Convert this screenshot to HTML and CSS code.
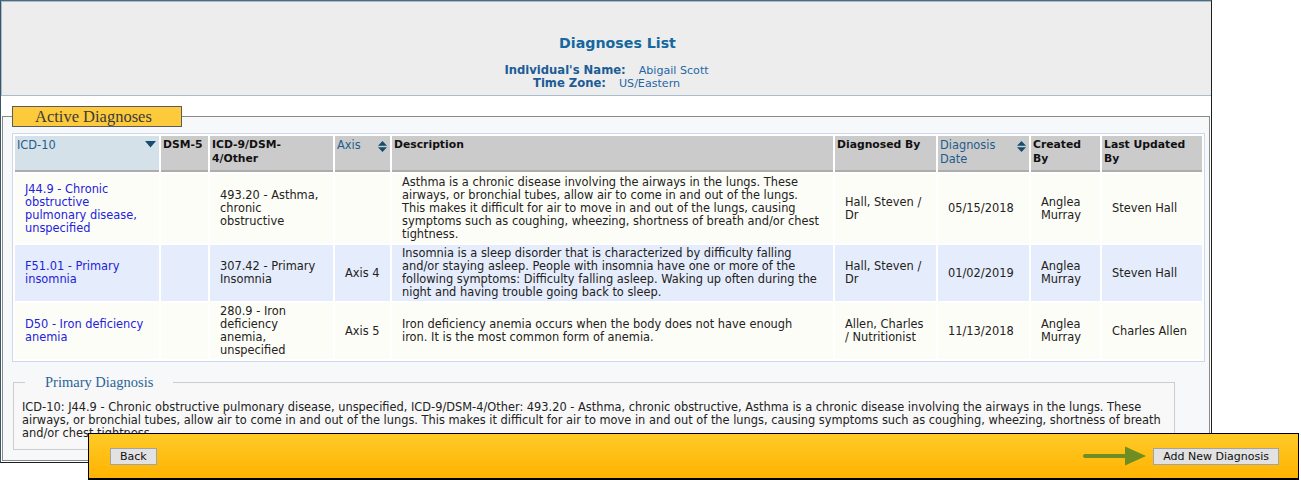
FILE: index.html
```html
<!DOCTYPE html>
<html>
<head>
<meta charset="utf-8">
<title>Diagnoses List</title>
<link rel="stylesheet" href="styles.css">
</head>
<body>
<div class="page">
  <header class="panel">
    <h1 class="title">Diagnoses List</h1>
    <div class="info">
      <div class="info-line"><span class="label">Individual's Name:</span><span class="value">Abigail Scott</span></div>
      <div class="info-line"><span class="label">Time Zone:</span><span class="value">US/Eastern</span></div>
    </div>
  </header>

  <fieldset class="active">
    <legend class="active-legend">Active Diagnoses</legend>
    <table class="grid">
      <colgroup>
        <col class="c-icd10"><col class="c-dsm5"><col class="c-icd9"><col class="c-axis"><col class="c-desc"><col class="c-by"><col class="c-date"><col class="c-created"><col class="c-updated">
      </colgroup>
      <thead>
        <tr>
          <th class="sorted"><div class="th-in"><span class="sortable">ICD-10</span>
            <svg class="ico" width="11" height="7" viewBox="0 0 11 7"><path d="M0 0H11L5.5 6.5Z" fill="#184c6e"/></svg></div></th>
          <th><div class="th-in"><span>DSM-5</span></div></th>
          <th><div class="th-in"><span class="narrow">ICD-9/DSM-4/Other</span></div></th>
          <th><div class="th-in"><span class="sortable">Axis</span>
            <svg class="ico" width="9" height="11" viewBox="0 0 9 11"><path d="M0 4.8H9L4.5 0Z M0 6.2H9L4.5 11Z" fill="#184c6e"/></svg></div></th>
          <th><div class="th-in"><span>Description</span></div></th>
          <th><div class="th-in"><span>Diagnosed By</span></div></th>
          <th><div class="th-in"><span class="sortable">Diagnosis Date</span>
            <svg class="ico" width="9" height="11" viewBox="0 0 9 11"><path d="M0 4.8H9L4.5 0Z M0 6.2H9L4.5 11Z" fill="#184c6e"/></svg></div></th>
          <th><div class="th-in"><span>Created By</span></div></th>
          <th><div class="th-in"><span>Last Updated By</span></div></th>
        </tr>
      </thead>
      <tbody>
        <tr class="odd">
          <td><a class="code-link" href="#">J44.9 - Chronic obstructive pulmonary disease, unspecified</a></td>
          <td></td>
          <td>493.20 - Asthma, chronic obstructive</td>
          <td class="axis"></td>
          <td class="desc">Asthma is a chronic disease involving the airways in the lungs. These airways, or bronchial tubes, allow air to come in and out of the lungs. This makes it difficult for air to move in and out of the lungs, causing symptoms such as coughing, wheezing, shortness of breath and/or chest tightness.</td>
          <td>Hall, Steven / Dr</td>
          <td>05/15/2018</td>
          <td>Anglea Murray</td>
          <td>Steven Hall</td>
        </tr>
        <tr class="even">
          <td><a class="code-link" href="#">F51.01 - Primary insomnia</a></td>
          <td></td>
          <td>307.42 - Primary Insomnia</td>
          <td class="axis">Axis 4</td>
          <td class="desc">Insomnia is a sleep disorder that is characterized by difficulty falling and/or staying asleep. People with insomnia have one or more of the following symptoms: Difficulty falling asleep. Waking up often during the night and having trouble going back to sleep.</td>
          <td>Hall, Steven / Dr</td>
          <td>01/02/2019</td>
          <td>Anglea Murray</td>
          <td>Steven Hall</td>
        </tr>
        <tr class="odd">
          <td><a class="code-link" href="#">D50 - Iron deficiency anemia</a></td>
          <td></td>
          <td>280.9 - Iron deficiency anemia, unspecified</td>
          <td class="axis">Axis 5</td>
          <td class="desc">Iron deficiency anemia occurs when the body does not have enough iron. It is the most common form of anemia.</td>
          <td>Allen, Charles / Nutritionist</td>
          <td>11/13/2018</td>
          <td>Anglea Murray</td>
          <td>Charles Allen</td>
        </tr>
      </tbody>
    </table>

    <fieldset class="primary">
      <legend class="primary-legend">Primary Diagnosis</legend>
      <p class="primary-text">ICD-10: J44.9 - Chronic obstructive pulmonary disease, unspecified, ICD-9/DSM-4/Other: 493.20 - Asthma, chronic obstructive, Asthma is a chronic disease involving the airways in the lungs. These airways, or bronchial tubes, allow air to come in and out of the lungs. This makes it difficult for air to move in and out of the lungs, causing symptoms such as coughing, wheezing, shortness of breath and/or chest tightness.</p>
    </fieldset>
  </fieldset>
</div>

<div class="actionbar">
  <button class="btn" type="button">Back</button>
  <div class="bar-right">
    <svg class="arrow" width="64" height="20" viewBox="0 0 64 20">
      <line x1="2" y1="10" x2="46" y2="10" stroke="#6e8d22" stroke-width="4" stroke-linecap="round"/>
      <path d="M42 0.5L63 10L42 19.5Z" fill="#6e8d22"/>
    </svg>
    <button class="btn" type="button">Add New Diagnosis</button>
  </div>
</div>
</body>
</html>
```

FILE: styles.css
```css
* { box-sizing: border-box; }

html, body {
  margin: 0;
  padding: 0;
  background: #ffffff;
}

body {
  font-family: "DejaVu Sans", Verdana, sans-serif;
  font-size: 11px;
  color: #222222;
  width: 1301px;
  height: 480px;
  overflow: hidden;
}

.page {
  width: 1212px;
  border: 1px solid #1e1e1e;
  border-top-color: #4d6b7a;
  border-left-color: #3a5664;
  padding-bottom: 1px;
}

/* ---------- header panel ---------- */
.panel {
  background: #ededed;
  border: 1px solid #a9bccb;
  border-right: none;
  padding: 31px 0 5px 0;
  text-align: center;
}

.title {
  margin: 0 0 11px 0;
  padding-left: 22px;
  font-size: 14.2px;
  line-height: 20px;
  font-weight: bold;
  color: #14679f;
}

.info-line {
  line-height: 13px;
  font-size: 11.1px;
  color: #1e67a6;
}

.label {
  font-weight: bold;
  font-size: 11.6px;
  color: #1b5c96;
  margin-right: 13px;
}

/* ---------- active diagnoses fieldset ---------- */
.active {
  margin: 10px 1px 0 1px;
  padding: 6px 5px 10px 10px;
  border: 1px solid #8a8a8a;
  background: #f7f8fa;
  min-width: 0;
}

.active-legend {
  margin-left: -1px;
  width: 170px;
  height: 21px;
  padding: 0 0 0 22px;
  background: #fdca3c;
  border: 1px solid #5c5c5c;
  font-family: "Liberation Serif", "DejaVu Serif", serif;
  font-size: 16.5px;
  line-height: 19px;
  color: #3a3a3a;
}

/* ---------- table ---------- */
.grid {
  width: 1191px;
  table-layout: fixed;
  border-collapse: separate;
  border-spacing: 2px;
  border: 1px solid #ccd8ee;
  background: #ffffff;
  margin-left: -1px;
}

.c-icd10 { width: 144px; }
.c-dsm5 { width: 47px; }
.c-icd9 { width: 123px; }
.c-axis { width: 55px; }
.c-desc { width: 441px; }
.c-by { width: 101px; }
.c-date { width: 91px; }
.c-created { width: 69px; }
.c-updated { width: 100px; }

.grid th {
  background: #cbcbcb;
  border-bottom: 2px solid #acacac;
  height: 36px;
  padding: 2px 2px 2px 2px;
  vertical-align: top;
  text-align: left;
  font-size: 10.8px;
  line-height: 14px;
  font-weight: bold;
  color: #111111;
}

.grid th.sorted {
  background: #d5e1e9;
}

.th-in {
  display: flex;
  justify-content: space-between;
  align-items: flex-start;
  gap: 4px;
}

.th-in .narrow {
  max-width: 92px;
}

.th-in .sortable {
  font-weight: normal;
  color: #1f5d8d;
  font-size: 11.4px;
}

.ico {
  flex: none;
  margin-top: 3px;
  margin-right: 1px;
}

.grid td {
  padding: 2px 10px 2px 10px;
  vertical-align: middle;
  line-height: 13px;
  font-size: 11.4px;
  color: #222222;
}

.grid td.desc {
  padding-right: 12px;
}

.grid tr.odd td { background: #fdfdf7; }
.grid tr.even td { background: #e5ecfb; }

.grid td.axis { white-space: nowrap; }

.code-link {
  color: #2222dd;
  text-decoration: none;
}

/* ---------- primary diagnosis ---------- */
.primary {
  margin: 12px 0 0 0;
  width: 1162px;
  padding: 11px 8px 9px 8px;
  border: 1px solid #cdcdcd;
  background: #f8f8f8;
  min-width: 0;
}

.primary-legend {
  margin-left: 3px;
  padding: 0 20px;
  font-family: "Liberation Serif", "DejaVu Serif", serif;
  font-size: 14.5px;
  line-height: 16px;
  color: #2a6496;
}

.primary-text {
  margin: 0;
  line-height: 13px;
  font-size: 11.4px;
  color: #222222;
}

/* ---------- bottom action bar (overlays content) ---------- */
.actionbar {
  position: fixed;
  left: 88px;
  top: 433px;
  width: 1211px;
  height: 47px;
  border: 1px solid #000000;
  border-bottom-width: 2px;
  background: linear-gradient(#ffca28, #ffb300);
  display: flex;
  align-items: center;
  justify-content: space-between;
  padding: 0 19px 0 21px;
}

.bar-right {
  display: flex;
  align-items: center;
  gap: 6px;
}

.arrow { display: block; }

.btn {
  height: 17px;
  padding: 0 9px;
  background: #e2e2e2;
  border: 1px solid #a3a3a3;
  border-radius: 0;
  font-family: "DejaVu Sans", Verdana, sans-serif;
  font-size: 11px;
  line-height: 15px;
  color: #111111;
}
```
